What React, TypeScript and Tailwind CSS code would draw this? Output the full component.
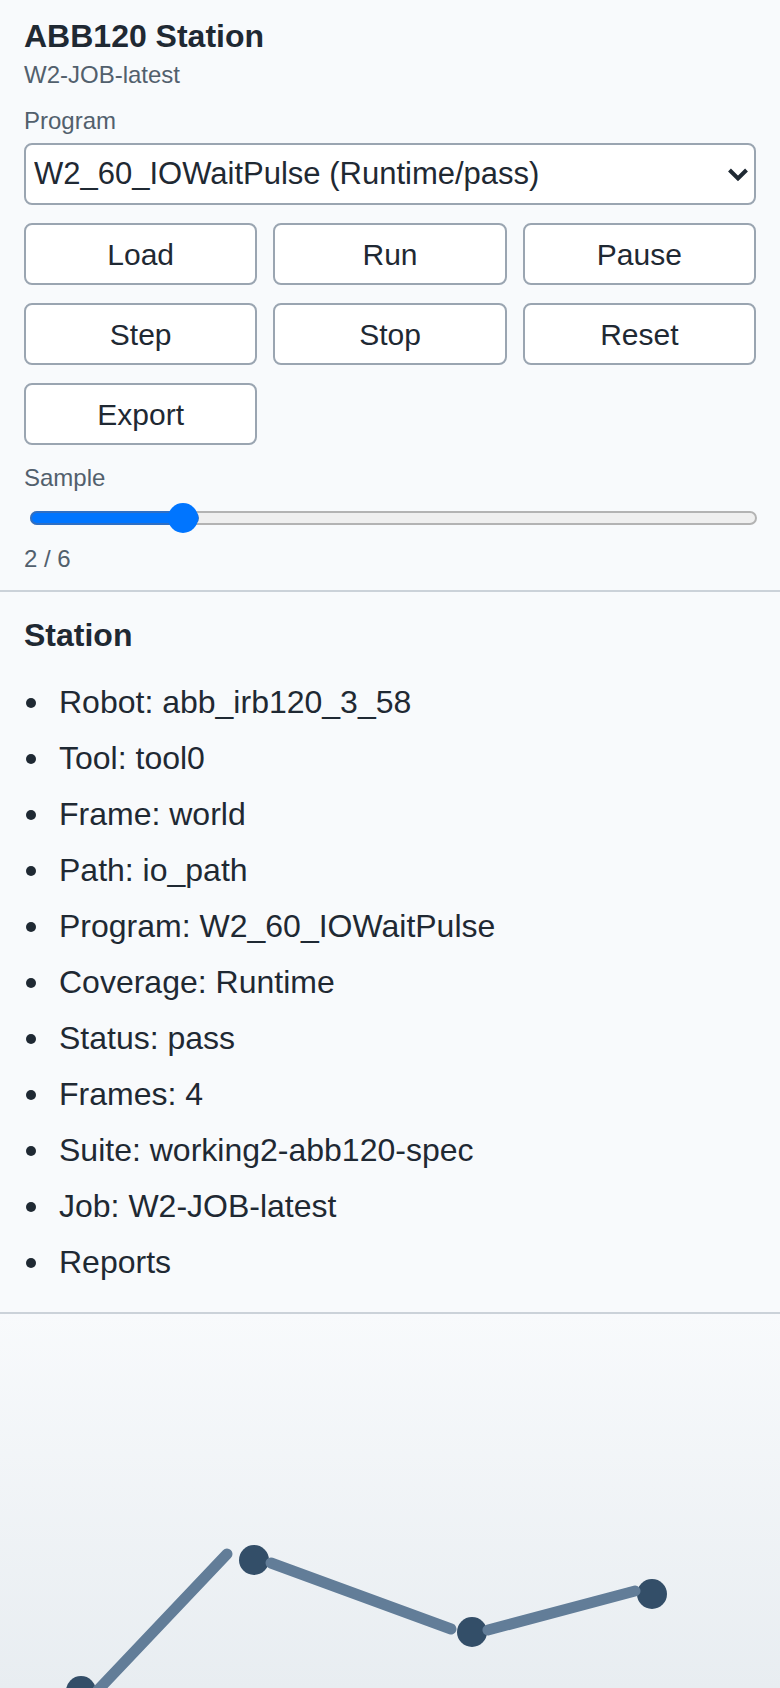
const font = { fontFamily: '"Liberation Sans", Arial, sans-serif' };

const controls = ['Load', 'Run', 'Pause', 'Step', 'Stop', 'Reset', 'Export'];

const details = [
  'Robot: abb_irb120_3_58',
  'Tool: tool0',
  'Frame: world',
  'Path: io_path',
  'Program: W2_60_IOWaitPulse',
  'Coverage: Runtime',
  'Status: pass',
  'Frames: 4',
  'Suite: working2-abb120-spec',
  'Job: W2-JOB-latest',
  'Reports',
];

// projected joint positions of the path preview
const joints = [
  { x: 81, y: 377 },
  { x: 254, y: 246 },
  { x: 472, y: 318 },
  { x: 652, y: 280 },
];

const links = [
  { x1: 98, y1: 376, x2: 227, y2: 240 },
  { x1: 271, y1: 249, x2: 451, y2: 315 },
  { x1: 488, y1: 316, x2: 635, y2: 277 },
];

function SampleSlider({ value, min, max }: { value: number; min: number; max: number }) {
  const pct = (value - min) / (max - min);
  return (
    <div className="relative mt-[11px] h-[30px]">
      <div className="absolute left-[6px] right-[-1px] top-[8px] h-[14px] rounded-full border-2 border-[#b3b3b3] bg-[#efefef]" />
      <div
        className="absolute left-[6px] top-[8px] h-[14px] rounded-full border-2 border-[#2f6fc4] bg-[#0075ff]"
        style={{ width: `calc(${pct} * (100% - 36px) + 30px)` }}
      />
      <div
        className="absolute top-0 h-[30px] w-[30px] rounded-full bg-[#0075ff]"
        style={{ left: `calc(${pct} * (100% - 36px) + 5px)` }}
      />
    </div>
  );
}

export default function App() {
  return (
    <div className="min-h-screen bg-[#f8fafc] text-[#1f2933]" style={font}>
      <section className="border-b-2 border-[#cbd2d9] px-[24px] pt-[18px] pb-[17px]">
        <h1 className="text-[32px] font-bold leading-[36px]">ABB120 Station</h1>
        <p className="mt-[7px] text-[24px] leading-[28px] text-[#52606d]">W2-JOB-latest</p>

        <label className="mt-[18px] block text-[24px] leading-[28px] text-[#52606d]">Program</label>
        <div className="relative mt-[8px]">
          <select
            className="h-[62px] w-full appearance-none rounded-[8px] border-2 border-[#9aa5b1] bg-white pl-[8px] text-[31px] text-[#1f2933] outline-none"
            style={font}
            defaultValue="w2_60"
          >
            <option value="w2_60">W2_60_IOWaitPulse (Runtime/pass)</option>
          </select>
          <svg
            className="pointer-events-none absolute right-[6px] top-1/2 -translate-y-1/2"
            width="24"
            height="15"
            viewBox="0 0 24 15"
          >
            <path d="M3.5 3.5 L12 12 L20.5 3.5" fill="none" stroke="#1f2933" strokeWidth="4" />
          </svg>
        </div>

        <div className="mt-[18px] grid grid-cols-3 gap-x-[16px] gap-y-[18px]">
          {controls.map((c) => (
            <button
              key={c}
              className="h-[62px] rounded-[8px] border-2 border-[#9aa5b1] bg-white text-[30px] text-[#1f2933]"
              style={font}
            >
              {c}
            </button>
          ))}
        </div>

        <p className="mt-[19px] text-[24px] leading-[28px] text-[#52606d]">Sample</p>
        <SampleSlider value={2} min={1} max={6} />
        <p className="mt-[12px] text-[24px] leading-[28px] text-[#52606d]">2 / 6</p>
      </section>

      <section className="border-b-2 border-[#cbd2d9] px-[24px] pt-[25px] pb-[32px]">
        <h2 className="text-[32px] font-bold leading-[36px]">Station</h2>
        <ul className="mt-[31px] flex flex-col gap-[20px] pl-[2px]">
          {details.map((d) => (
            <li key={d} className="flex h-[36px] items-center gap-[23px] text-[32px] leading-[36px]">
              <span className="mt-[2px] h-[10px] w-[10px] rounded-full bg-[#1f2933]" />
              <span>{d}</span>
            </li>
          ))}
        </ul>
      </section>

      <section className="h-[374px] overflow-hidden bg-linear-to-b from-[#f8fafc] to-[#e8edf1]">
        <svg width="780" height="374" viewBox="0 0 780 374" className="block">
          {joints.map((j, i) => (
            <circle key={i} cx={j.x} cy={j.y} r="15" fill="#334e68" />
          ))}
          {links.map((l, i) => (
            <line
              key={i}
              x1={l.x1}
              y1={l.y1}
              x2={l.x2}
              y2={l.y2}
              stroke="#627d98"
              strokeWidth="11"
              strokeLinecap="round"
            />
          ))}
        </svg>
      </section>
    </div>
  );
}
